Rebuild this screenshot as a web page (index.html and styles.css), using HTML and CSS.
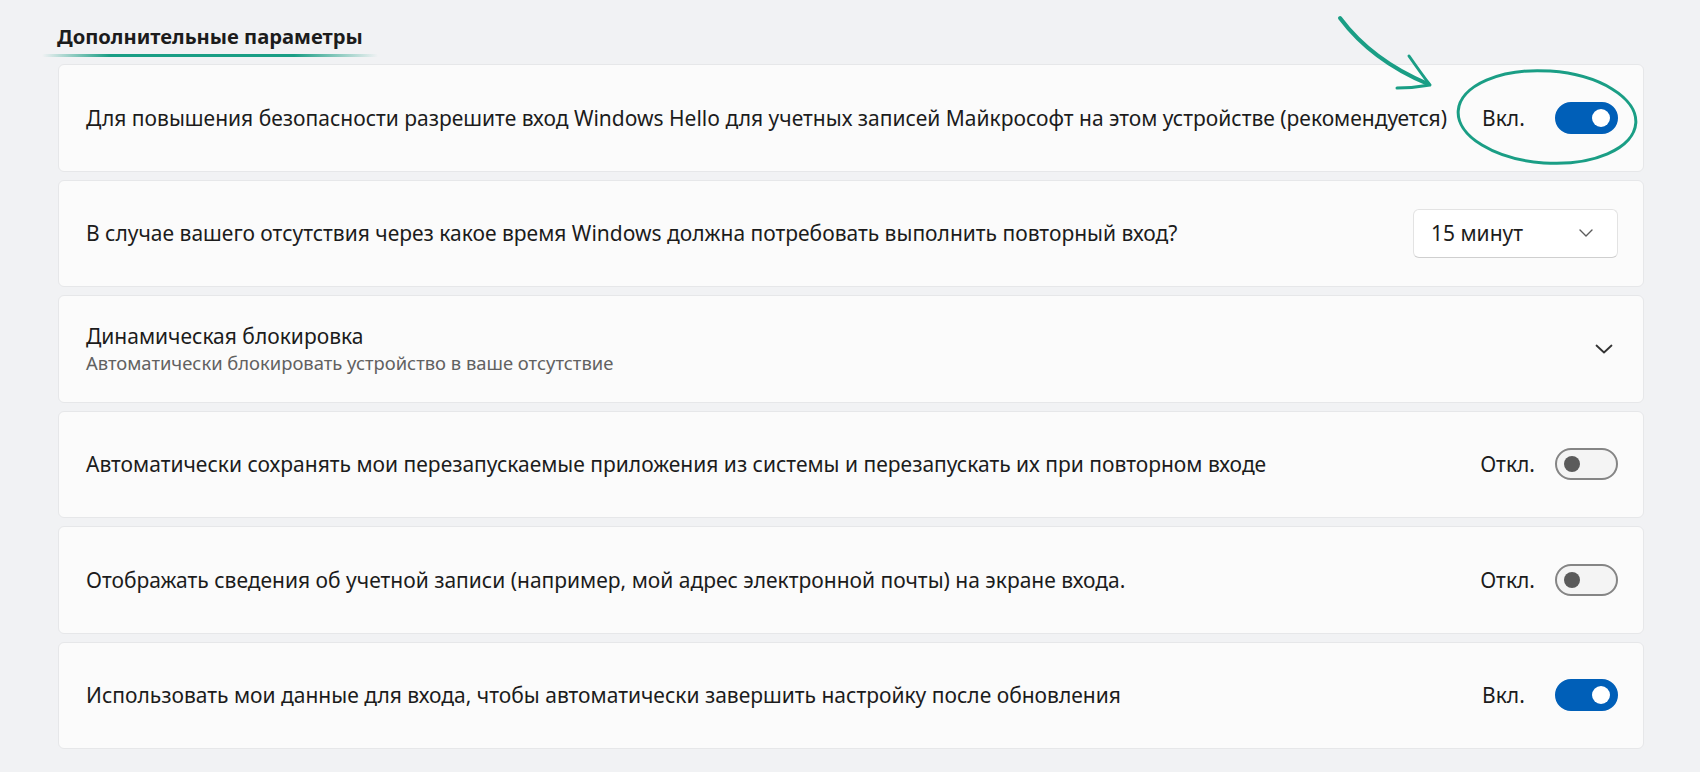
FILE: index.html
```html
<!DOCTYPE html>
<html lang="ru">
  <head>
    <meta charset="UTF-8" />
    <meta name="viewport" content="width=device-width, initial-scale=1.0" />
    <title>Дополнительные параметры</title>
    <link rel="stylesheet" href="styles.css">
  </head>
  <body>
    <main class="page">
      <h2 class="section-title"><span>Дополнительные параметры</span></h2>

      <div class="list">
        <!--
          Windows Hello
        -->
        <div class="card">
          <p class="label">Для повышения безопасности разрешите вход Windows Hello для учетных записей Майкрософт на этом устройстве (рекомендуется)</p>
          <div class="control">
            <span class="state">Вкл.</span>
            <span class="toggle on" role="switch" aria-checked="true"></span>
          </div>
        </div>

        <!--
          Re-sign-in timeout
        -->
        <div class="card">
          <p class="label">В случае вашего отсутствия через какое время Windows должна потребовать выполнить повторный вход?</p>
          <div class="control">
            <button class="select" type="button">
              <span>15 минут</span>
              <svg width="14" height="8" viewBox="0 0 14 8" aria-hidden="true">
                <path d="M1 1l6 6 6-6" fill="none" stroke="#5c5c5c" stroke-width="1.4" stroke-linecap="round" stroke-linejoin="round" />
              </svg>
            </button>
          </div>
        </div>

        <!--
          Dynamic lock
        -->
        <div class="card">
          <div class="label">
            <p>Динамическая блокировка</p>
            <p class="hint">Автоматически блокировать устройство в ваше отсутствие</p>
          </div>
          <div class="control expander">
            <svg width="18" height="10" viewBox="0 0 18 10" aria-hidden="true">
              <path d="M1.5 1.5l7.5 7 7.5-7" fill="none" stroke="#333" stroke-width="1.8" stroke-linecap="round" stroke-linejoin="round" />
            </svg>
          </div>
        </div>

        <!--
          Restartable apps
        -->
        <div class="card">
          <p class="label">Автоматически сохранять мои перезапускаемые приложения из системы и перезапускать их при повторном входе</p>
          <div class="control">
            <span class="state">Откл.</span>
            <span class="toggle" role="switch" aria-checked="false"></span>
          </div>
        </div>

        <!--
          Account details
        -->
        <div class="card">
          <p class="label">Отображать сведения об учетной записи (например, мой адрес электронной почты) на экране входа.</p>
          <div class="control">
            <span class="state">Откл.</span>
            <span class="toggle" role="switch" aria-checked="false"></span>
          </div>
        </div>

        <!--
          Finish setup after update
        -->
        <div class="card">
          <p class="label">Использовать мои данные для входа, чтобы автоматически завершить настройку после обновления</p>
          <div class="control">
            <span class="state">Вкл.</span>
            <span class="toggle on" role="switch" aria-checked="true"></span>
          </div>
        </div>
      </div>

      <!-- hand-drawn marks over the first toggle -->
      <svg class="marks" width="1700" height="772" viewBox="0 0 1700 772" aria-hidden="true">
        <path d="M1340 18 C1358 42 1385 66 1428 84" fill="none" stroke="#1a9e85" stroke-width="4" stroke-linecap="round" />
        <path d="M1409 56 C1416 66 1423 76 1430 85 C1419 87 1408 88 1397 88" fill="none" stroke="#1a9e85" stroke-width="3" stroke-linecap="round" stroke-linejoin="round" />
        <ellipse cx="1547" cy="117" rx="89" ry="46" transform="rotate(4 1547 117)" fill="none" stroke="#1a9e85" stroke-width="3" />
      </svg>
    </main>
  </body>
</html>
```

FILE: styles.css
```css
/*
  Global styles
*/

:root {
  --page-bg: #f1f2f4;
  --card-bg: #fbfbfb;
  --card-border: #e6e7e9;
  --text: #1c1c1c;
  --hint: #616161;
  --accent: #005fb8;
  --teal: #1a9e85;
}
* {
  margin: 0;
  padding: 0;
  box-sizing: border-box;
  font-family: "Noto Sans", "Open Sans", sans-serif;
}
body {
  background-color: var(--page-bg);
  color: var(--text);
}

/*
  Page
*/

.page {
  position: relative;
  width: 1700px;
  height: 772px;
  padding: 24px 56px 0 58px;
  overflow: hidden;
}
.section-title {
  height: 40px;
  margin-left: -16px;
  font-size: 20.2px;
  font-weight: 700;
  line-height: 25px;
}
.section-title span {
  display: inline-block;
  padding: 0 15px 0 15px;
}
.section-title span::after {
  content: "";
  display: block;
  height: 3px;
  margin: 5px -15px 0;
  border-radius: 2px;
  background: linear-gradient(90deg, rgba(26, 158, 133, 0) 0%, var(--teal) 20%, var(--teal) 75%, rgba(26, 158, 133, 0) 100%);
}

/*
  Setting cards
*/

.list {
  display: flex;
  flex-direction: column;
  gap: 8px;
}
.card {
  display: flex;
  align-items: center;
  justify-content: space-between;
  height: 107.5px;
  padding: 0 25px 0 27px;
  border: 1px solid var(--card-border);
  border-radius: 6px;
  background-color: var(--card-bg);
}
.label {
  font-size: 21px;
  line-height: 28px;
}
.label .hint {
  font-size: 18.4px;
  line-height: 26px;
  color: var(--hint);
}
.control {
  display: flex;
  align-items: center;
  gap: 20px;
  flex-shrink: 0;
}
.state {
  min-width: 53px;
  font-size: 21px;
}
.expander {
  padding-right: 5px;
}

/*
  Toggle switch
*/

.toggle {
  position: relative;
  width: 63px;
  height: 32px;
  border: 2px solid #858585;
  border-radius: 16px;
  background-color: #f4f4f4;
}
.toggle::after {
  content: "";
  position: absolute;
  top: 6px;
  left: 7px;
  width: 16px;
  height: 16px;
  border-radius: 50%;
  background-color: #5b5b5b;
}
.toggle.on {
  border-color: var(--accent);
  background-color: var(--accent);
}
.toggle.on::after {
  left: auto;
  right: 6px;
  top: 5px;
  width: 18px;
  height: 18px;
  background-color: white;
}

/*
  Dropdown
*/

.select {
  display: flex;
  align-items: center;
  justify-content: space-between;
  width: 205px;
  height: 49px;
  padding: 0 24px 0 17px;
  border: 1px solid #e3e3e3;
  border-bottom-color: #cfcfcf;
  border-radius: 6px;
  background-color: white;
  color: var(--text);
  font-size: 21px;
}

/*
  Annotation overlay
*/

.marks {
  position: absolute;
  top: 0;
  left: 0;
  pointer-events: none;
}
```
